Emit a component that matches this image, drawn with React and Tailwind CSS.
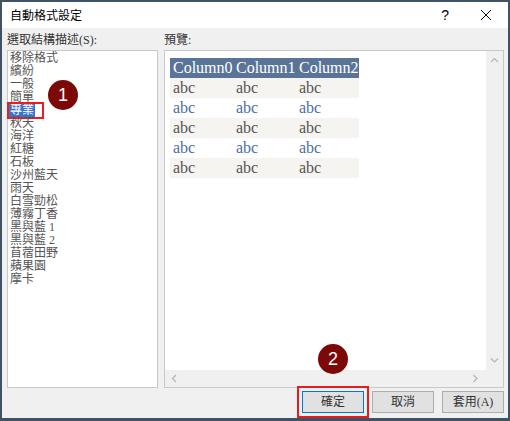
const styles = [
  "移除格式", "繽紛", "一般", "簡單", "專業", "秋天", "海洋", "紅糖", "石板",
  "沙州藍天", "雨天", "白雪勁松", "薄霧丁香", "黑與藍 1", "黑與藍 2", "苜蓿田野", "蘋果園", "摩卡",
];

const serif = { fontFamily: '"Liberation Serif", "Noto Sans CJK TC", serif' };
const cjk = { fontFamily: '"Liberation Serif", "Noto Sans CJK TC", serif' };

function Chevron({ dir }) {
  const pts = {
    up: "1,5 4.5,1.5 8,5",
    down: "1,1.5 4.5,5 8,1.5",
    left: "5,1 1.5,4.5 5,8",
    right: "1.5,1 5,4.5 1.5,8",
  }[dir];
  const w = dir === "up" || dir === "down" ? 9 : 7;
  const h = dir === "up" || dir === "down" ? 7 : 9;
  return (
    <svg width={w} height={h} viewBox={`0 0 ${w} ${h}`}>
      <polyline points={pts} fill="none" stroke="#b4b4b4" strokeWidth="1.2" />
    </svg>
  );
}

function Badge({ n, className }) {
  return (
    <div
      className={`absolute w-[30px] h-[30px] rounded-full bg-[#7d0808] flex items-center justify-center text-white text-[18px] ${className}`}
      style={{ fontFamily: '"Liberation Sans", Arial, sans-serif' }}
    >
      {n}
    </div>
  );
}

export default function App() {
  const rows = [0, 1, 2, 3, 4];
  return (
    <div className="relative w-[510px] h-[421px]" style={cjk}>
      <div className="w-full h-full flex flex-col border-t-2 border-l-2 border-r-2 border-b-[3px] border-[#3f5366]">
        {/* Title bar */}
        <div className="h-[26px] bg-white flex items-center pl-[8px] shrink-0">
          <span className="text-[12px] text-black" style={{ fontFamily: '"Noto Sans CJK TC", sans-serif' }}>
            自動格式設定
          </span>
          <span className="ml-auto text-[14px] text-black mr-[31px]" style={{ fontFamily: '"Liberation Sans", sans-serif' }}>
            ?
          </span>
          <svg width="12" height="12" viewBox="0 0 12 12" className="mr-[16px]">
            <path d="M1 1 L11 11 M11 1 L1 11" stroke="#111" strokeWidth="1" />
          </svg>
        </div>

        {/* Body */}
        <div className="flex-1 bg-[#f0f0f0] flex flex-col pl-[5px] pr-[4px]">
          <div className="flex gap-[6px]">
            {/* List column */}
            <div className="w-[151px] flex flex-col">
              <div className="h-[22px] pt-[4px] text-[12px] leading-[16px] text-[#333]">選取結構描述(S):</div>
              <div className="h-[338px] border border-[#c8c8c8] bg-white pt-[1px]">
                {styles.map((s, i) => (
                  <div key={s} className="relative h-[13px] text-[12px] leading-[13px] text-[#555] pl-[1px]">
                    {i === 4 ? (
                      <>
                        <span className="inline-block bg-[#3a74c9] text-white px-[1px]">{s}</span>
                        <div className="absolute left-[-1px] top-[-2px] w-[37px] h-[17px] border-2 border-[#ee1c1c]" />
                      </>
                    ) : (
                      <span className="px-[1px]">{s}</span>
                    )}
                  </div>
                ))}
              </div>
            </div>

            {/* Preview column */}
            <div className="w-[340px] flex flex-col">
              <div className="h-[22px] pt-[4px] text-[12px] leading-[16px] text-[#333]">預覽:</div>
              <div className="h-[338px] border border-[#c8c8c8] bg-white flex flex-col">
                <div className="flex-1 flex">
                  <div className="flex-1 pl-[5px] pt-[7px]" style={serif}>
                    <div className="grid grid-cols-[63px_63px_63px] w-[189px]">
                      {["Column0", "Column1", "Column2"].map((c) => (
                        <div key={c} className="h-[20px] bg-[#5a7497] text-white text-[16px] leading-[20px] pl-[3px]">
                          {c}
                        </div>
                      ))}
                      {rows.map((r) =>
                        [0, 1, 2].map((c) => (
                          <div
                            key={`${r}-${c}`}
                            className={`h-[20px] text-[16px] leading-[20px] pl-[3px] ${
                              r % 2 === 0 ? "bg-[#f6f4f0] text-[#555]" : "bg-white text-[#4d6e9c]"
                            }`}
                          >
                            abc
                          </div>
                        ))
                      )}
                    </div>
                  </div>
                  <div className="w-[17px] bg-[#f0f0f0] flex flex-col items-center justify-between pt-[6px] pb-[6px]">
                    <Chevron dir="up" />
                    <Chevron dir="down" />
                  </div>
                </div>
                <div className="h-[17px] flex">
                  <div className="flex-1 bg-[#f0f0f0] flex items-center justify-between pl-[6px] pr-[7px]">
                    <Chevron dir="left" />
                    <Chevron dir="right" />
                  </div>
                  <div className="w-[17px] bg-[#f0f0f0]" />
                </div>
              </div>
            </div>
          </div>

          {/* Buttons */}
          <div className="mt-[3px] flex justify-end gap-[8px]">
            <button className="w-[62px] h-[22px] bg-[#e1e1e1] border border-[#0078d7] text-[12px] text-[#333] outline-2 outline-[#e81c1c] outline-offset-[3px]">
              確定
            </button>
            <button className="w-[62px] h-[22px] bg-[#e1e1e1] border border-[#adadad] text-[12px] text-[#333]">
              取消
            </button>
            <button className="w-[62px] h-[22px] bg-[#e1e1e1] border border-[#adadad] text-[12px] text-[#333]">
              套用(A)
            </button>
          </div>
        </div>
      </div>

      <Badge n="1" className="left-[48px] top-[80px]" />
      <Badge n="2" className="left-[318px] top-[344px]" />
    </div>
  );
}
